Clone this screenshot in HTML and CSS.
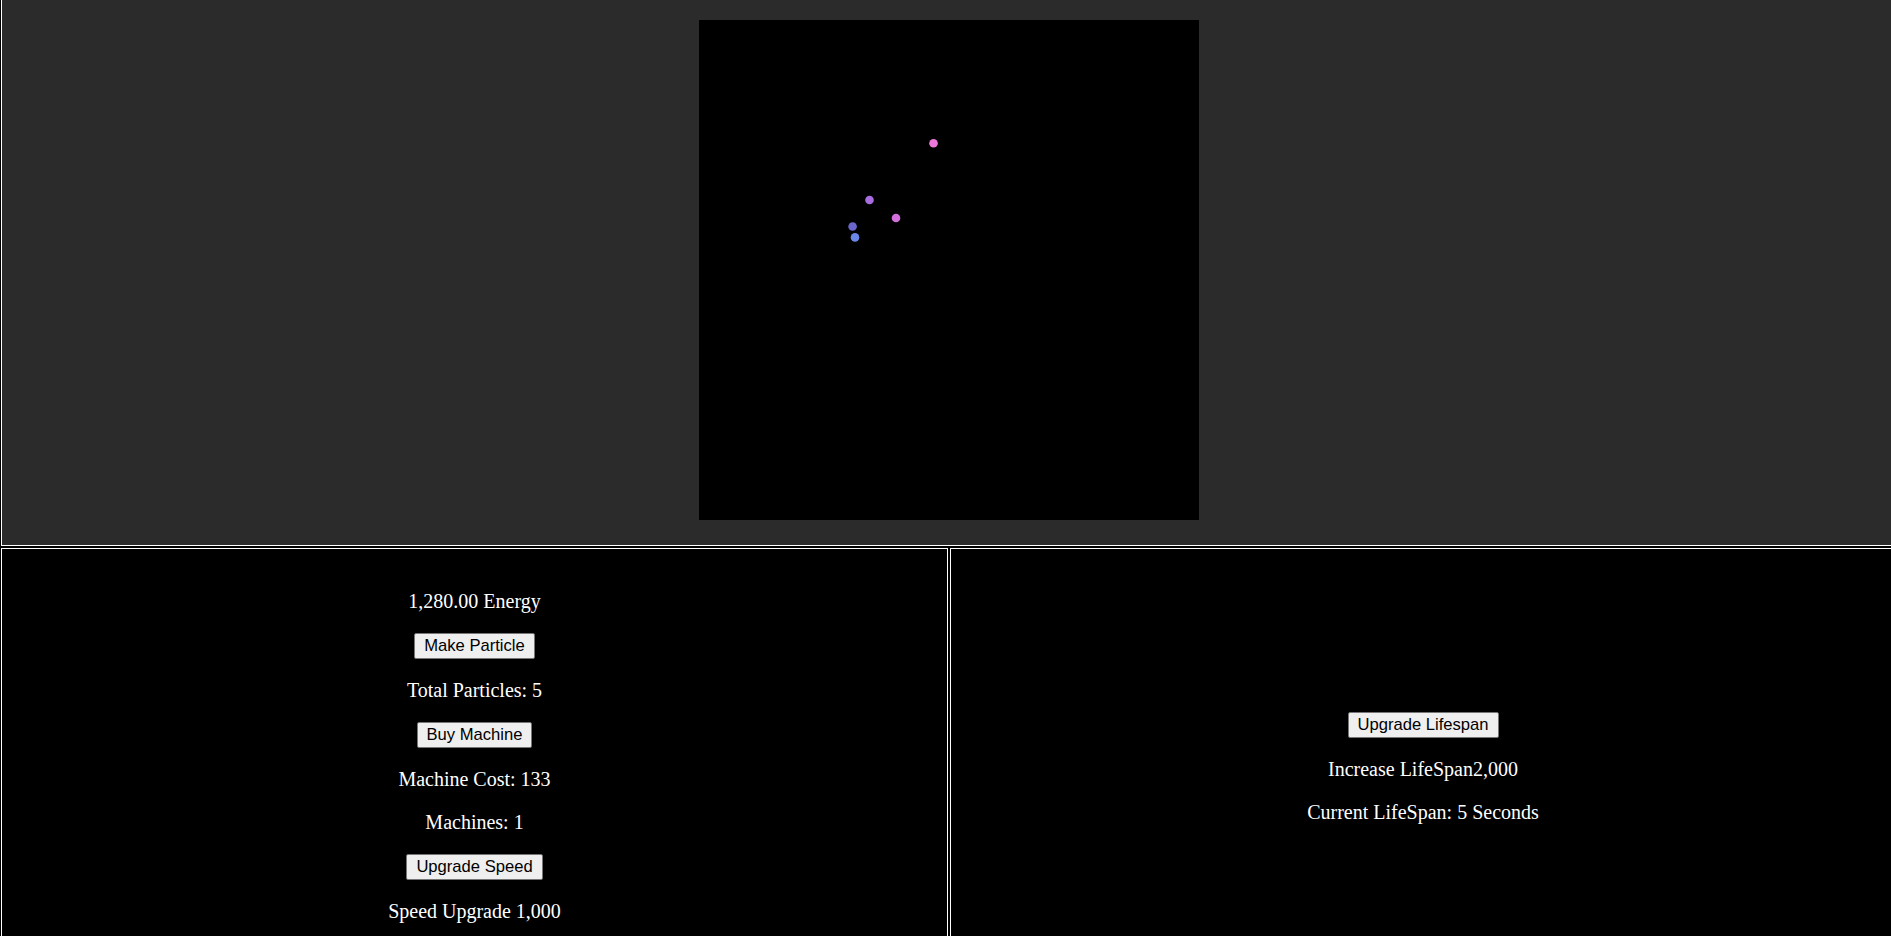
FILE: index.html
```html
<!DOCTYPE html>
<html lang="en">
<head>
<meta charset="utf-8">
<title>Particles</title>
<link rel="stylesheet" href="styles.css">
</head>
<body>
<div class="page">
  <section class="stage">
    <div class="canvas">
      <svg width="500" height="500" viewBox="0 0 500 500">
        <circle cx="234.5" cy="123.3" r="4.3" fill="#ee78da"/>
        <circle cx="170.5" cy="180" r="4.3" fill="#a86ee0"/>
        <circle cx="197" cy="198" r="4.3" fill="#d56edd"/>
        <circle cx="153.6" cy="206.5" r="4.3" fill="#6a66cc"/>
        <circle cx="156" cy="217.4" r="4.3" fill="#6a86e6"/>
      </svg>
    </div>
  </section>
  <div class="panels">
    <section class="panel panel-left">
      <p class="stat">1,280.00 Energy</p>
      <button class="btn">Make Particle</button>
      <p class="stat">Total Particles: 5</p>
      <button class="btn">Buy Machine</button>
      <p class="stat">Machine Cost: 133</p>
      <p class="stat">Machines: 1</p>
      <button class="btn">Upgrade Speed</button>
      <p class="stat">Speed Upgrade 1,000</p>
    </section>
    <section class="panel panel-right">
      <button class="btn">Upgrade Lifespan</button>
      <p class="stat">Increase LifeSpan2,000</p>
      <p class="stat">Current LifeSpan: 5 Seconds</p>
    </section>
  </div>
</div>
</body>
</html>
```
FILE: styles.css
```css
html, body {
  margin: 0;
  padding: 0;
  background: #000;
  overflow: hidden;
  height: 100%;
}

body {
  font-family: "Liberation Serif", "Times New Roman", serif;
  color: #fff;
}

.page {
  padding-left: 1px;
  width: 1896px;
}

.stage {
  box-sizing: border-box;
  width: 1895px;
  height: 546px;
  background: #2b2b2b;
  border-left: 1px solid #fff;
  border-right: 1px solid #fff;
  border-bottom: 1px solid #fff;
  display: flex;
  justify-content: center;
  align-items: flex-start;
  padding-top: 20px;
}

.canvas {
  width: 500px;
  height: 500px;
  background: #000;
}

.canvas svg {
  display: block;
}

.panels {
  display: flex;
  gap: 2px;
  margin-top: 2px;
}

.panel {
  box-sizing: border-box;
  width: 947px;
  height: 388px;
  border: 1px solid #fff;
  border-bottom: none;
  background: #000;
  display: flex;
  flex-direction: column;
  align-items: center;
  gap: 20px;
}

.panel-left {
  padding-top: 41px;
}

.panel-right {
  width: 946px;
  padding-top: 163px;
}

.stat {
  margin: 0;
  font-size: 20px;
  line-height: 23px;
  white-space: nowrap;
}

.btn {
  font-family: "Liberation Sans", Arial, sans-serif;
  font-size: 16.6px;
  line-height: 18px;
  padding: 3px 9px;
  border: 1px solid #767676;
  border-radius: 2px;
  background: #efefef;
  color: #000;
  margin: 0;
}
```
